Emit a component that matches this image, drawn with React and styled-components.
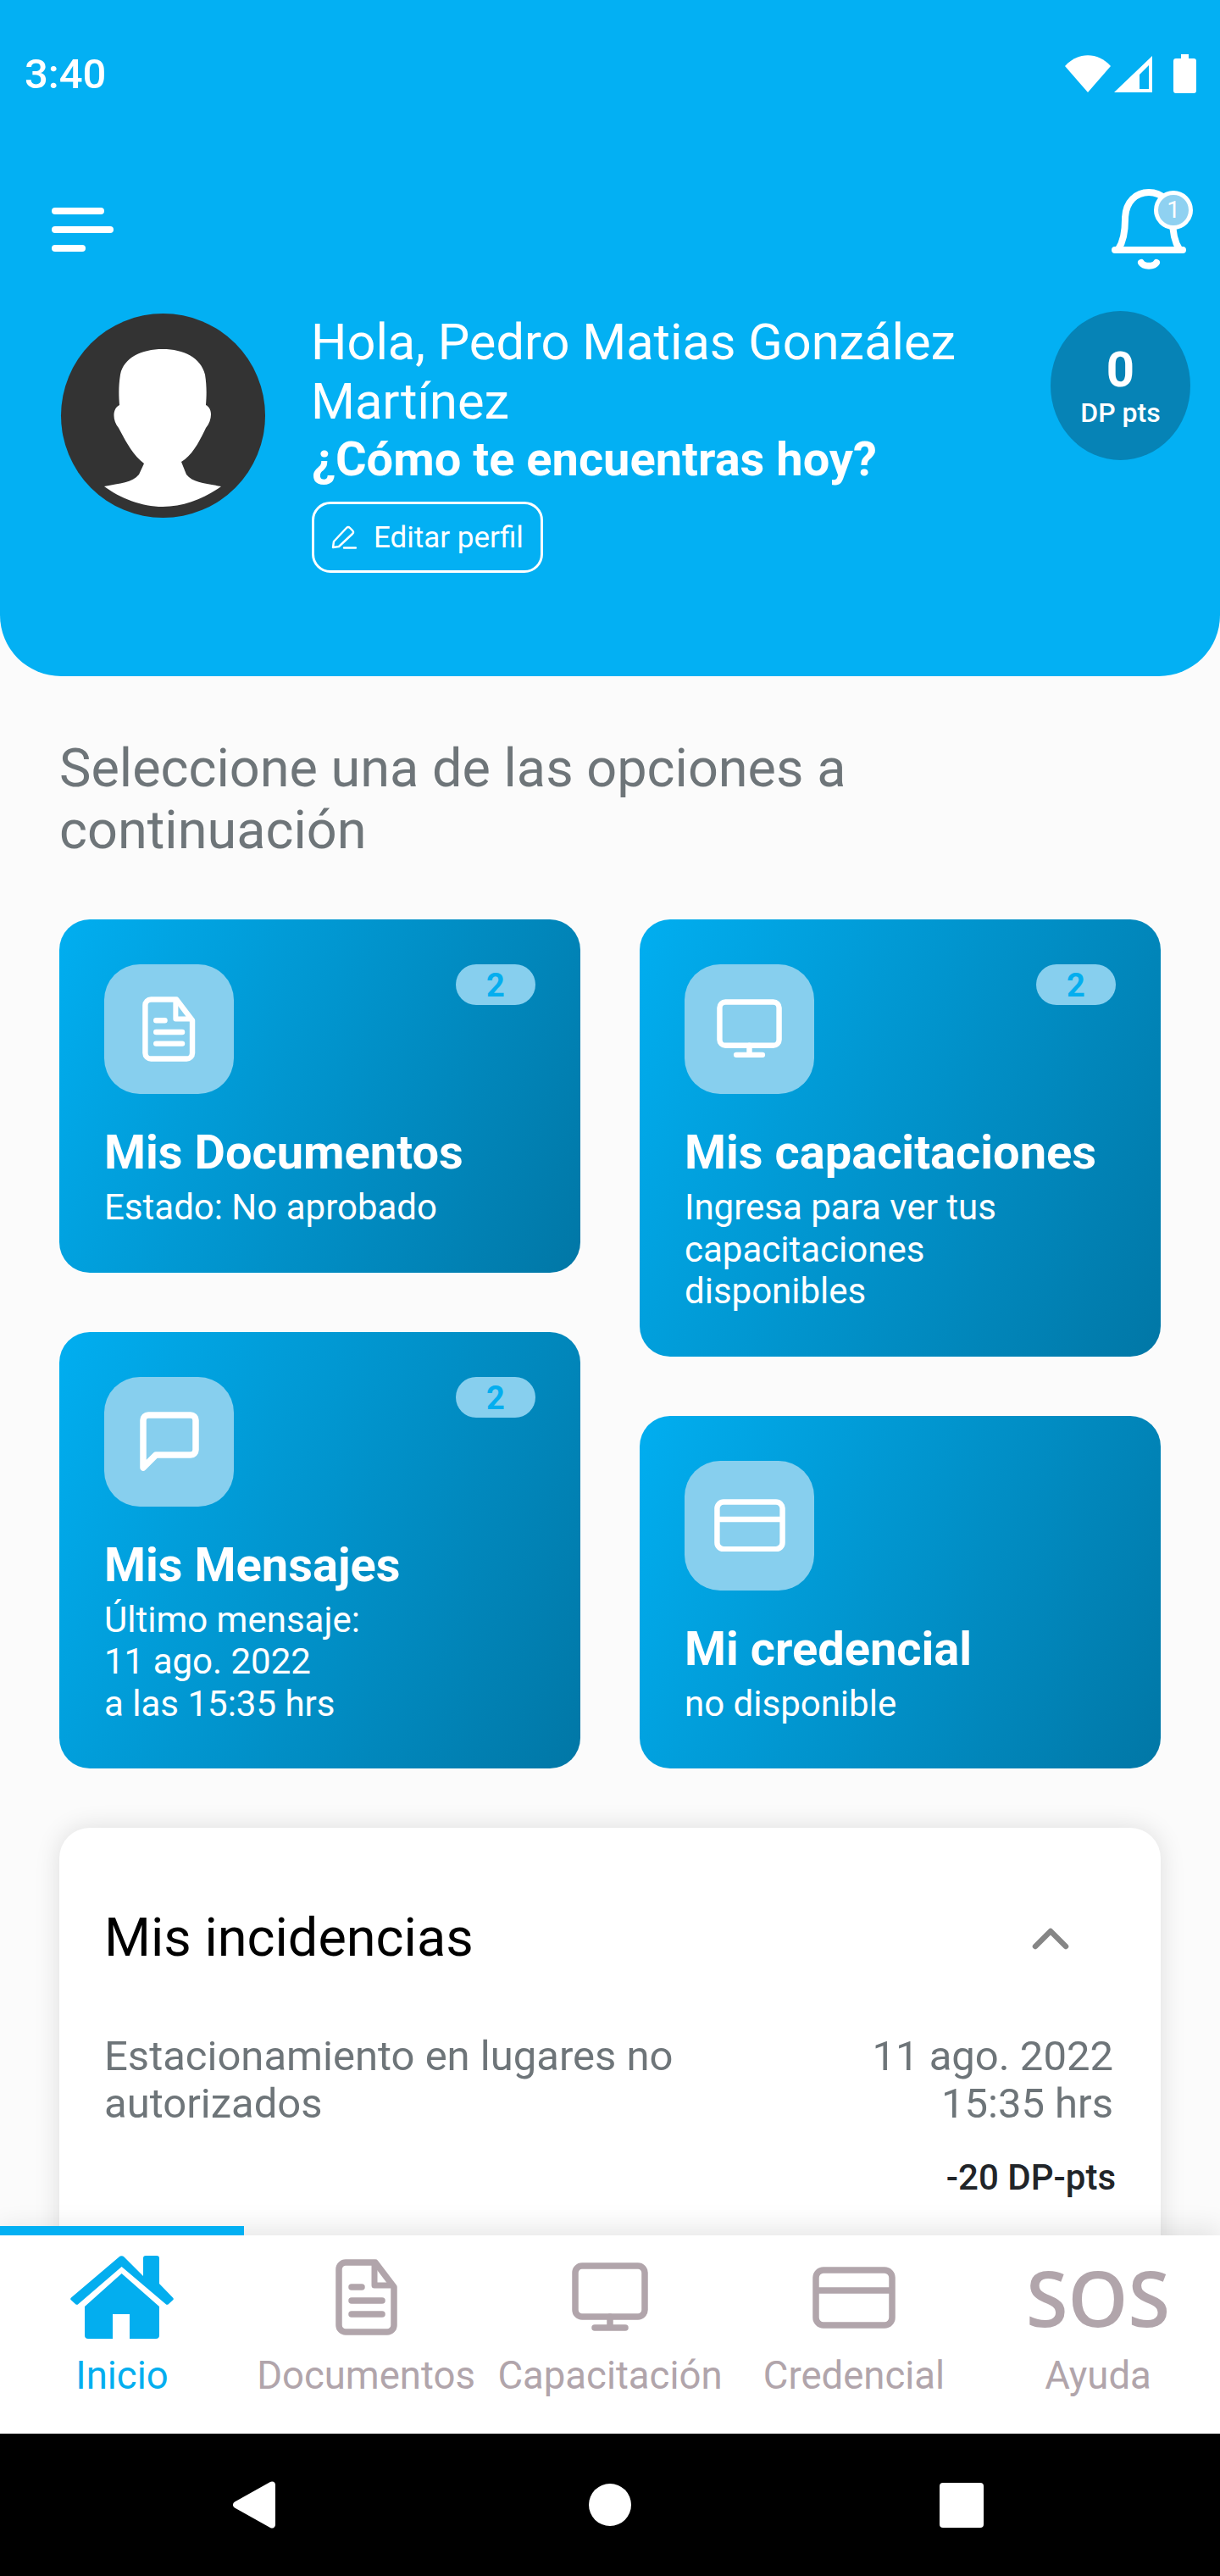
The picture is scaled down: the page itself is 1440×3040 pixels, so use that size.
import React from 'react';
import styled, { createGlobalStyle } from 'styled-components';

const Global = createGlobalStyle`
  html, body { margin: 0; padding: 0; background: #fbfbfb; }
  * { box-sizing: border-box; }
  body { font-family: Roboto, "Liberation Sans", sans-serif; }
`;

const Screen = styled.div`
  width: 1440px; height: 3040px; display: flex; flex-direction: column;
  overflow: hidden; background: #fbfbfb;
`;
const Scroll = styled.main`
  flex: 1; min-height: 0; overflow: hidden;
`;
const Header = styled.header`
  height: 798px; background: #03b0f3; border-radius: 0 0 72px 72px; color: #fff;
`;
const StatusBar = styled.div`
  height: 174px; display: flex; align-items: center; justify-content: space-between;
  padding: 0 28px 0 29px;
`;
const Time = styled.span`
  font-size: 49px; font-weight: 500;
`;
const StatusIcons = styled.div`
  display: flex; align-items: center;
  svg { display: block; }
  svg:nth-child(1) { margin-right: 4px; }
  svg:nth-child(2) { margin-right: 25px; }
`;
const Toolbar = styled.div`
  height: 193px; display: flex; align-items: center; justify-content: space-between;
  padding: 0 40px 0 61px;
`;
const MenuBars = styled.div`
  display: flex; flex-direction: column; gap: 14px;
`;
const MenuBar = styled.span`
  display: block; height: 8px; border-radius: 4px; background: #fff; width: ${p => p.$w}px;
`;
const BellWrap = styled.div`
  position: relative; width: 88px; height: 96px; margin-top: 0;
  svg { display: block; }
`;
const BellBadge = styled.span`
  position: absolute; left: 50px; top: 2px; width: 46px; height: 46px; border-radius: 50%;
  border: 5px solid #fff; background: #8fd1f1; color: #fff; font-size: 28px;
  display: flex; align-items: center; justify-content: center;
`;
const Profile = styled.div`
  display: flex; align-items: flex-start; padding: 0 35px 0 72px;
`;
const Avatar = styled.div`
  width: 241px; height: 241px; margin-top: 3px; border-radius: 50%; background: #333; flex: none;
  overflow: hidden; svg { display: block; }
`;
const ProfileText = styled.div`
  margin-left: 55px; width: 872px; flex: none; padding-top: 2px;
`;
const Hello = styled.div`
  font-size: 59.5px; line-height: 70px; font-weight: 400; margin-left: -1px;
`;
const Mood = styled.div`
  font-size: 56px; line-height: 70px; font-weight: 700; margin-top: -2px;
`;
const EditButton = styled.button`
  margin-top: 15px; height: 84px; width: 273px; border: 3px solid #fff; border-radius: 22px;
  background: transparent; color: #fff; display: flex; align-items: center; padding: 0 0 0 20px; gap: 20px;
  font: 400 35px Roboto, sans-serif; white-space: nowrap; svg { display: block; flex: none; }
`;
const Points = styled.div`
  width: 165px; height: 176px; border-radius: 50%; background: #0683b6; flex: none; margin-left: 0;
  display: flex; flex-direction: column; align-items: center; justify-content: center;
`;
const PointsValue = styled.span`
  font-size: 58px; line-height: 64px; font-weight: 700;
`;
const PointsLabel = styled.span`
  font-size: 32px; line-height: 38px; font-weight: 500;
`;
const Body = styled.section`
  padding: 72px 70px 0;
`;
const Lead = styled.h2`
  margin: 0 0 69px; font-size: 63px; line-height: 73px; font-weight: 400; color: #6e7579; width: 1000px;
`;
const Columns = styled.div`
  display: flex; gap: 70px; align-items: flex-start;
`;
const Column = styled.div`
  flex: 1; display: flex; flex-direction: column; gap: 70px;
`;
const Card = styled.article`
  position: relative; padding: 53px 53px 52px; border-radius: 36px; color: #fff;
  background: linear-gradient(114deg, #01aef0 0%, #0177a6 100%);
`;
const Tile = styled.div`
  width: 153px; height: 153px; border-radius: 42px; background: #87cfee;
  display: flex; align-items: center; justify-content: center; svg { display: block; }
`;
const CountBadge = styled.span`
  position: absolute; top: 53px; right: 53px; width: 94px; height: 48px; border-radius: 24px;
  background: #87cfee; color: #03aeef; font-size: 38px; font-weight: 700; padding-top: 2px;
  display: flex; align-items: center; justify-content: center;
`;
const CardTitle = styled.h3`
  margin: 29px 0 0; font-size: 56px; line-height: 80px; font-weight: 700; white-space: nowrap;
`;
const CardText = styled.p`
  margin: 0; font-size: 42px; line-height: 49.5px; font-weight: 400;
`;
const Incidents = styled.section`
  margin-top: 70px; background: #fff; border-radius: 36px; padding: 95px 53px 100px;
  box-shadow: 0 0 30px rgba(0,0,0,.12);
`;
const IncHead = styled.div`
  display: flex; align-items: center; justify-content: space-between; padding-right: 55px;
  svg { display: block; }
`;
const IncTitle = styled.h3`
  margin: 0; font-size: 63px; line-height: 70px; font-weight: 400; color: #000;
`;
const IncRow = styled.div`
  margin-top: 77px; display: flex; justify-content: space-between;
  font-size: 49px; line-height: 56px; color: #6e7579;
`;
const IncName = styled.div`
  width: 760px;
`;
const IncDate = styled.div`
  text-align: right; padding-right: 3px;
`;
const IncPoints = styled.div`
  margin-top: 34px; text-align: right; font-size: 42px; line-height: 50px; font-weight: 500; color: #212529;
`;
const Nav = styled.nav`
  position: relative; height: 234px; flex: none; display: flex; background: #fff; padding-top: 12px;
  box-shadow: 0 -8px 30px rgba(0,0,0,.1);
`;
const NavIndicator = styled.span`
  position: absolute; left: 0; top: -11px; width: 288px; height: 11px; background: #03b0f3;
`;
const NavItem = styled.div`
  flex: 1; min-width: 0; display: flex; flex-direction: column; align-items: center;
  color: ${p => (p.$active ? '#03aeef' : '#b1a5ab')};
`;
const NavIcon = styled.div`
  height: 122px; display: flex; align-items: center; justify-content: center; svg { display: block; }
`;
const NavLabel = styled.span`
  margin-top: 7px; font-size: 45.5px; line-height: 50px; white-space: nowrap;
`;
const SosMark = styled.span`
  font-family: "Open Sans", sans-serif; font-weight: 600; font-size: 90px; line-height: 1;
`;
const SystemBar = styled.div`
  height: 168px; flex: none; background: #000; position: relative;
  display: flex; align-items: center; justify-content: space-between; padding: 0 279px 0 275px;
  svg { display: block; }
`;
const HomeDot = styled.span`
  width: 50px; height: 50px; border-radius: 50%; background: #fff; margin-left: 6px;
`;
const RecentSquare = styled.span`
  width: 52px; height: 53px; border-radius: 4px; background: #fff;
`;

const DocIcon = ({ h = 90 }) => (
  <svg width={h * 73 / 90} height={h} viewBox="0 0 73 90" fill="none" stroke="currentColor" strokeWidth="7.5" strokeLinecap="round" strokeLinejoin="round">
    <path d="M12 4H47L69 33V78a8 8 0 0 1-8 8H12a8 8 0 0 1-8-8V12a8 8 0 0 1 8-8Z" />
    <path d="M46 6V31H67" strokeWidth="7" />
    <path d="M19 33H31M19 49H55M19 65H55" />
  </svg>
);
const MonitorIcon = ({ w = 90 }) => (
  <svg width={w} height={w * 82 / 90} viewBox="0 0 90 82" fill="none" stroke="currentColor" strokeWidth="7.5" strokeLinecap="round" strokeLinejoin="round">
    <rect x="4" y="4" width="82" height="60" rx="8" />
    <path d="M45 64V77M27 77H63" />
  </svg>
);
const CredIcon = ({ w = 98 }) => (
  <svg width={w} height={w * 73 / 98} viewBox="0 0 98 73" fill="none" stroke="currentColor" strokeWidth="7.5" strokeLinejoin="round">
    <rect x="4" y="4" width="90" height="65" rx="9" />
    <path d="M4 28H94" />
  </svg>
);
const ChatIcon = () => (
  <svg width="70" height="70" viewBox="0 0 70 70" fill="none" stroke="#fff" strokeWidth="7.5" strokeLinecap="round" strokeLinejoin="round">
    <path d="M4 66V10a6 6 0 0 1 6-6H60a6 6 0 0 1 6 6V45a6 6 0 0 1-6 6H19Z" />
  </svg>
);
const HomeIcon = () => (
  <svg width="122" height="98" viewBox="0 0 122 98" fill="currentColor">
    <path d="M57.5 1.5a4 4 0 0 1 6 0L86 24V3a3 3 0 0 1 3-3h13a3 3 0 0 1 3 3V33L121 49.5a2 2 0 0 1 .5 2.5L116 57a2.5 2.5 0 0 1-3.5 0L60.6 13 9.5 57a2.5 2.5 0 0 1-3.5 0L.5 52a2 2 0 0 1 .5-2.5Z" />
    <path d="M60.6 21 105 60V94a4 4 0 0 1-4 4H70V69H50V98H21a4 4 0 0 1-4-4V60Z" />
  </svg>
);

const cardsLeft = [
  { icon: <DocIcon h={77} />, title: 'Mis Documentos', lines: ['Estado: No aprobado'], count: 2 },
  { icon: <ChatIcon />, title: 'Mis Mensajes', lines: ['Último mensaje:', '11 ago. 2022', 'a las 15:35 hrs'], count: 2 },
];
const cardsRight = [
  { icon: <MonitorIcon w={77} />, title: 'Mis capacitaciones', lines: ['Ingresa para ver tus', 'capacitaciones', 'disponibles'], count: 2 },
  { icon: <CredIcon w={84} />, title: 'Mi credencial', lines: ['no disponible'] },
];

const MenuCard = ({ icon, title, lines, count }) => (
  <Card>
    <Tile>{icon}</Tile>
    {count ? <CountBadge>{count}</CountBadge> : null}
    <CardTitle>{title}</CardTitle>
    <CardText>{lines.map((l, i) => <React.Fragment key={l}>{i > 0 && <br />}{l}</React.Fragment>)}</CardText>
  </Card>
);

export default function App() {
  return (
    <Screen>
      <Global />
      <Scroll>
        <Header>
          <StatusBar>
            <Time>3:40</Time>
            <StatusIcons>
              <svg width="54" height="44" viewBox="0 0 54 44" fill="#fff"><path d="M0 13C15-4 39-4 54 13L27 44Z" /></svg>
              <svg width="45" height="44" viewBox="0 0 45 44" fill="#fff" fillRule="evenodd"><path d="M45 1V44H0ZM41 40V12L30 23V40Z" /></svg>
              <svg width="27" height="46" viewBox="0 0 27 46" fill="#fff"><path d="M9 0H18V5H24a3 3 0 0 1 3 3V43a3 3 0 0 1-3 3H3a3 3 0 0 1-3-3V8a3 3 0 0 1 3-3H9Z" /></svg>
            </StatusIcons>
          </StatusBar>
          <Toolbar>
            <MenuBars>
              <MenuBar $w={62} />
              <MenuBar $w={73} />
              <MenuBar $w={40} />
            </MenuBars>
            <BellWrap>
              <svg width="88" height="96" viewBox="0 0 88 96" fill="none" stroke="#fff" strokeWidth="8" strokeLinecap="round" strokeLinejoin="round">
                <path d="M4 72H84M8 71C14 62 16 52 16 36C16 14 30 4 44 4C58 4 72 14 72 36C72 52 74 62 80 71" />
                <path d="M35 87C38 92 50 92 53 87" />
              </svg>
              <BellBadge>1</BellBadge>
            </BellWrap>
          </Toolbar>
          <Profile>
            <Avatar>
              <svg width="241" height="241" viewBox="0 0 241 241" fill="#fff">
                <path d="M51 204C70 200 84 200 92 190L98 177C85 167 77 152 68 135C60 125 61 112 69 108C68 95 68 85 70 72C74 52 95 42 120 42C145 42 165 52 170 72C172 85 172 95 171 108C179 112 179 125 171 135C163 152 155 167 142 175L148 190C156 200 170 200 189 204C170 218 145 228 120 228C95 228 70 218 51 204Z" />
              </svg>
            </Avatar>
            <ProfileText>
              <Hello>Hola, Pedro Matias González<br />Martínez</Hello>
              <Mood>¿Cómo te encuentras hoy?</Mood>
              <EditButton>
                <svg width="30" height="28" viewBox="0 0 30 28" fill="none" stroke="#fff" strokeWidth="2.4" strokeLinecap="round" strokeLinejoin="round">
                  <path d="M2 26L3 19L18 3Q20 1 22 3L25 6Q27 8 25 10L9 25ZM15 26.5H29" />
                </svg>
                Editar perfil
              </EditButton>
            </ProfileText>
            <Points>
              <PointsValue>0</PointsValue>
              <PointsLabel>DP pts</PointsLabel>
            </Points>
          </Profile>
        </Header>
        <Body>
          <Lead>Seleccione una de las opciones a continuación</Lead>
          <Columns>
            <Column>{cardsLeft.map(c => <MenuCard key={c.title} {...c} />)}</Column>
            <Column>{cardsRight.map(c => <MenuCard key={c.title} {...c} />)}</Column>
          </Columns>
          <Incidents>
            <IncHead>
              <IncTitle>Mis incidencias</IncTitle>
              <svg width="44" height="28" viewBox="0 0 44 28" fill="none" stroke="#868686" strokeWidth="6.5" strokeLinecap="round" strokeLinejoin="round"><path d="M4 24L22 6L40 24" /></svg>
            </IncHead>
            <IncRow>
              <IncName>Estacionamiento en lugares no autorizados</IncName>
              <IncDate>11 ago. 2022<br />15:35 hrs</IncDate>
            </IncRow>
            <IncPoints>-20 DP-pts</IncPoints>
          </Incidents>
        </Body>
      </Scroll>
      <Nav>
        <NavIndicator />
        <NavItem $active><NavIcon><HomeIcon /></NavIcon><NavLabel>Inicio</NavLabel></NavItem>
        <NavItem><NavIcon><DocIcon /></NavIcon><NavLabel>Documentos</NavLabel></NavItem>
        <NavItem><NavIcon><MonitorIcon /></NavIcon><NavLabel>Capacitación</NavLabel></NavItem>
        <NavItem><NavIcon><CredIcon /></NavIcon><NavLabel>Credencial</NavLabel></NavItem>
        <NavItem><NavIcon><SosMark>SOS</SosMark></NavIcon><NavLabel>Ayuda</NavLabel></NavItem>
      </Nav>
      <SystemBar>
        <svg width="50" height="56" viewBox="0 0 50 56" fill="#fff"><path d="M2 24.5L44 1a4 4 0 0 1 6 3V52a4 4 0 0 1-6 3L2 31.5a4 4 0 0 1 0-7Z" /></svg>
        <HomeDot />
        <RecentSquare />
      </SystemBar>
    </Screen>
  );
}
